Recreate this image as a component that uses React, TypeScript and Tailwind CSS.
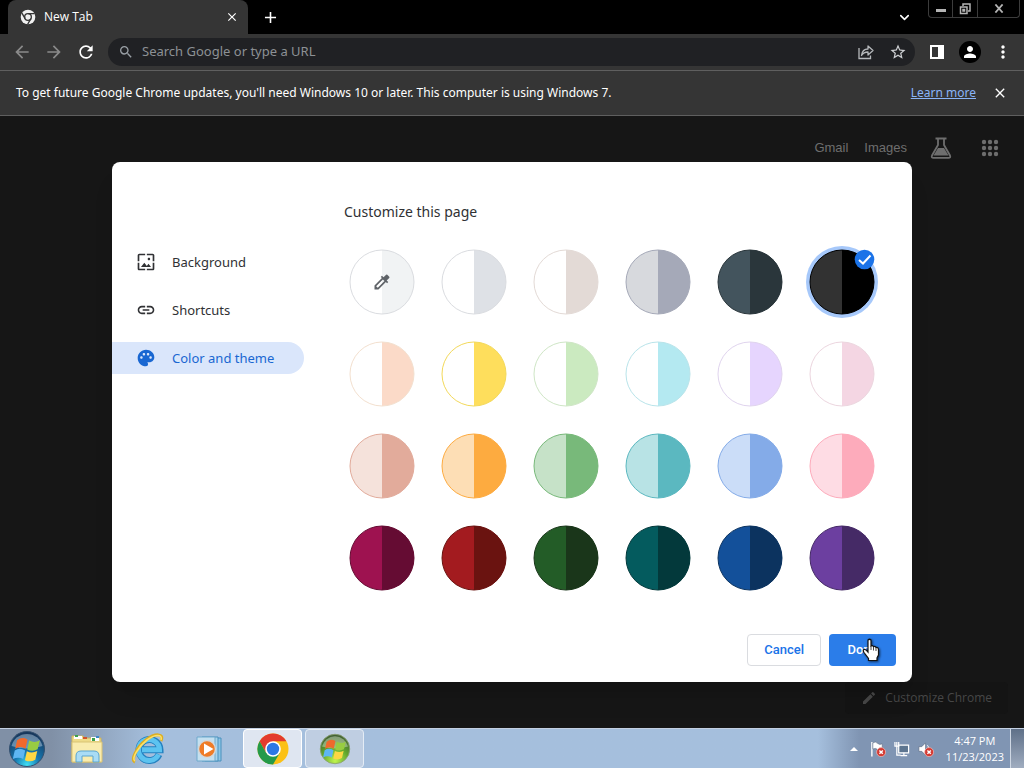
import React, { useState } from 'react';
import {
  MdAdd,
  MdArrowBack,
  MdArrowForward,
  MdClose,
  MdColorize,
  MdEdit,
  MdLink,
  MdMoreVert,
  MdPalette,
  MdPerson,
  MdRefresh,
  MdSearch,
  MdStarBorder,
  MdWallpaper
} from 'react-icons/md';
import { ChevronDown } from 'lucide-react';

interface Swatch {
  name: string;
  left: string;
  right: string;
  stroke: string;
}

const SWATCHES: Swatch[] = [
  { name: 'Custom color', left: '#ffffff', right: '#f1f3f4', stroke: '#dadce0' },
  { name: 'Default color', left: '#ffffff', right: '#dee1e6', stroke: '#dadce0' },
  { name: 'Warm grey', left: '#ffffff', right: '#e3dad6', stroke: '#e3dad6' },
  { name: 'Cool grey', left: '#d7d9dd', right: '#a5a9b8', stroke: '#a5a9b8' },
  { name: 'Midnight blue', left: '#43545d', right: '#2a363b', stroke: '#2a363b' },
  { name: 'Black', left: '#323232', right: '#000000', stroke: '#000000' },
  { name: 'Beige', left: '#ffffff', right: '#fbdac8', stroke: '#f3e0cf' },
  { name: 'Yellow', left: '#ffffff', right: '#fede5c', stroke: '#f3d95a' },
  { name: 'Light green', left: '#ffffff', right: '#cbeac0', stroke: '#cfe6c6' },
  { name: 'Light teal', left: '#ffffff', right: '#b4e9f1', stroke: '#b9e4ea' },
  { name: 'Light purple', left: '#ffffff', right: '#e6d5fe', stroke: '#e0d4ee' },
  { name: 'Light pink', left: '#ffffff', right: '#f4d6e3', stroke: '#ecd6df' },
  { name: 'Rose', left: '#f5e2db', right: '#e2ab9b', stroke: '#e2ab9b' },
  { name: 'Orange', left: '#fddeb5', right: '#fdab40', stroke: '#fdab40' },
  { name: 'Green', left: '#c6e2c8', right: '#78b97a', stroke: '#78b97a' },
  { name: 'Teal', left: '#b8e3e5', right: '#5bb8c0', stroke: '#5bb8c0' },
  { name: 'Blue', left: '#cbddf8', right: '#84abe8', stroke: '#84abe8' },
  { name: 'Pink', left: '#fedce4', right: '#fdabbb', stroke: '#fdabbb' },
  { name: 'Dark rose', left: '#9e1250', right: '#650c33', stroke: '#650c33' },
  { name: 'Dark red', left: '#a31b1f', right: '#6a1310', stroke: '#6a1310' },
  { name: 'Dark green', left: '#235c27', right: '#1a361a', stroke: '#1a361a' },
  { name: 'Dark teal', left: '#045b5e', right: '#03393b', stroke: '#03393b' },
  { name: 'Dark blue', left: '#13509a', right: '#0c335f', stroke: '#0c335f' },
  { name: 'Dark purple', left: '#6c3fa0', right: '#452a66', stroke: '#452a66' }
];

const MENU = [
  { label: 'Background', icon: MdWallpaper },
  { label: 'Shortcuts', icon: MdLink },
  { label: 'Color and theme', icon: MdPalette }
];

const ChromeGlyph: React.FC = () => (
  <svg viewBox="0 0 24 24" className="size-4" fill="none">
    <circle cx="12" cy="12" r="11" fill="#f1f1f1" />
    <circle cx="12" cy="12" r="5" fill="#f1f1f1" stroke="#353535" strokeWidth="2" />
    <path d="M12 7H22M7.700 14.500 2.700 5.800M16.300 14.500 11.300 23.200" stroke="#353535" strokeWidth="2" />
  </svg>
);

const ShareGlyph: React.FC = () => (
  <svg viewBox="0 0 18 18" className="size-[18px]" fill="none" stroke="currentColor" strokeWidth="1.300">
    <path d="M2 5V15.500H13.500V12.500" />
    <path d="M4.500 12.500C5 8.500 7.500 6 11 6V3L16 7.500L11 12V9C8 9 6 10 4.500 12.500Z" strokeLinejoin="round" />
  </svg>
);

const FlaskGlyph: React.FC = () => (
  <svg viewBox="0 0 24 24" className="size-6" fill="none" stroke="currentColor" strokeWidth="1.800">
    <path d="M6.500 2.500H17.500M9 2.500V9L3 19.500Q2 21.800 4.500 21.800H19.500Q22 21.800 21 19.500L15 9V2.500" />
    <path d="M9 12H15L19.500 19.500H4.500Z" fill="currentColor" stroke="none" />
  </svg>
);

const AppsGlyph: React.FC = () => (
  <svg viewBox="0 0 18 18" className="size-[18px]" fill="currentColor">
    {[3, 9, 15].map((y) => [3, 9, 15].map((x) => <circle key={`${x}-${y}`} cx={x} cy={y} r="2.200" />))}
  </svg>
);

const WindowsFlag: React.FC = () => (
  <g transform="translate(-5.200 -4.700) scale(1.300)">
    <path d="M11 11.500Q15 8.500 19 11L17.500 18Q13.500 15.500 9.500 18Z" fill="#f0692c" />
    <path d="M20.300 11.700Q24.500 14 28.500 11.500L26.800 18.500Q23 20.500 18.800 18.600Z" fill="#98cc42" />
    <path d="M9.200 19.300Q13 16.800 17.200 19.300L15.700 26Q12 23.800 7.700 26Z" fill="#5eb6f2" />
    <path d="M18.500 20Q22.500 22 26.500 19.800L25 26.500Q21 28.800 17 26.800Z" fill="#fdd744" />
  </g>
);

const StartOrb: React.FC = () => (
  <svg viewBox="0 0 38 38" className="size-[38px]">
    <defs>
      <radialGradient id="orb" cx="50%" cy="95%" r="90%">
        <stop offset="0" stopColor="#3fe0f5" />
        <stop offset="0.400" stopColor="#1577b0" />
        <stop offset="1" stopColor="#17375c" />
      </radialGradient>
    </defs>
    <circle cx="19" cy="19" r="17.500" fill="url(#orb)" stroke="#34506f" />
    <path d="M3.500 16A16 16 0 0 1 34.500 16Q19 21 3.500 16Z" fill="#dbe8f5" opacity="0.400" />
    <WindowsFlag />
  </svg>
);

const FolderIcon: React.FC = () => (
  <svg viewBox="0 0 34 32" className="h-8 w-[34px]">
    <path d="M2 3H13L15 5H31V29H2Z" fill="#eedb88" stroke="#cdb35c" />
    <path d="M4 3H12V6H4ZM21 4H29V8H21Z" fill="#fff" />
    <path d="M5 2H8V4H5Z" fill="#3aa04a" />
    <path d="M13 4H17V6H13Z" fill="#d2552e" />
    <path d="M22 5H25V8H22Z" fill="#3aa04a" />
    <path d="M26 3H29V5H26Z" fill="#3a86c8" />
    <path d="M2 9H32V29H2Z" fill="#f9ecae" stroke="#d9c374" />
    <path d="M6 29V23Q6 18 11 18H24Q29 18 29 23V29H23V23H12V29Z" fill="#a9dcf5" stroke="#5aa5d0" />
  </svg>
);

const ExplorerIcon: React.FC = () => (
  <svg viewBox="0 0 34 32" className="h-8 w-[34px]" fill="none">
    <path d="M28 21.500A10.500 10.500 0 1 1 29 16.800H11" stroke="#2582c0" strokeWidth="7" />
    <path d="M27.500 21.500A10.500 10.500 0 1 1 28.500 16.800H11" stroke="#5cc3f0" strokeWidth="5" />
    <path d="M4 29C-1 27 6 14 15 7C24 0 34 0 30 8" stroke="#dcae22" strokeWidth="3" />
    <path d="M4 28C0 26 7 14 16 7C24 1 32 1 30 7" stroke="#fbe06a" strokeWidth="1.600" />
  </svg>
);

const MediaPlayerIcon: React.FC = () => (
  <svg viewBox="0 0 34 32" className="h-8 w-[34px]">
    <path d="M12 5H28V28H12Z" fill="#8cc5e6" stroke="#4b91bd" />
    <path d="M9 4H25V28H9Z" fill="#a8d4ec" stroke="#4b91bd" />
    <path d="M4 4H22V28H4Z" fill="#c4e0f0" stroke="#6ea9cc" />
    <circle cx="14" cy="16" r="8.500" fill="#ef7c27" stroke="#d2d8dc" strokeWidth="1.500" />
    <path d="M11 10.500V21.500L20.500 16Z" fill="#fff" />
  </svg>
);

const ChromeIcon: React.FC = () => (
  <svg viewBox="0 0 32 32" className="size-8">
    <circle cx="16" cy="16" r="15.500" fill="#fbc116" />
    <path d="M2.600 8.200A15.500 15.500 0 0 1 29.400 8.200H16L9.200 19.800Z" fill="#e33b2e" />
    <path d="M2.600 8.200A15.500 15.500 0 0 0 16 31.500L22.800 19.900L9.200 19.900Z" fill="#249a4a" />
    <circle cx="16" cy="16" r="7.800" fill="#fff" />
    <circle cx="16" cy="16" r="6.200" fill="#2c78e4" />
  </svg>
);

const GreenOrb: React.FC = () => (
  <svg viewBox="0 0 38 38" className="size-8">
    <defs>
      <radialGradient id="green" cx="50%" cy="90%" r="90%">
        <stop offset="0" stopColor="#c0f550" />
        <stop offset="0.500" stopColor="#62a82c" />
        <stop offset="1" stopColor="#3e5a34" />
      </radialGradient>
    </defs>
    <circle cx="19" cy="19" r="17.500" fill="url(#green)" stroke="#8aa070" />
    <path d="M3.500 16A16 16 0 0 1 34.500 16Q19 21 3.500 16Z" fill="#fff" opacity="0.350" />
    <WindowsFlag />
  </svg>
);

const Muted: React.FC = () => (
  <g>
    <circle cx="11.800" cy="11.800" r="4.800" fill="#d43a32" stroke="#f3c4c0" strokeWidth="0.700" />
    <path d="M10 10L13.600 13.600M13.600 10L10 13.600" stroke="#fff" strokeWidth="1.500" />
  </g>
);

const TrayIcons: React.FC = () => (
  <div className="flex items-center gap-2">
    <svg viewBox="0 0 17 17" className="size-4">
      <path d="M2 1V16.500" stroke="#fff" strokeWidth="1.500" />
      <path d="M3 2Q6 0 8 2.500Q10 4.500 13 3V9Q10 11 8 9Q6 7 3 8.500Z" fill="#fff" stroke="#59677c" strokeWidth="0.600" />
      <Muted />
    </svg>
    <svg viewBox="0 0 17 17" className="size-4" fill="none">
      <path d="M5 4.500H15.500V12.500H5Z" fill="#5d7590" stroke="#fff" strokeWidth="1.300" />
      <path d="M7 15.500H14M10.500 12.500V15.500M3 6V15H7M1 1V5.500H5V1M3 1V5" stroke="#fff" strokeWidth="1.300" />
    </svg>
    <svg viewBox="0 0 17 17" className="size-4">
      <path d="M1 6H4L8 2V15L4 11H1Z" fill="#fff" stroke="#59677c" strokeWidth="0.600" />
      <path d="M10 4.500Q11.500 6 11 8" stroke="#fff" fill="none" />
      <Muted />
    </svg>
  </div>
);

const HandCursor: React.FC = () => (
  <svg viewBox="0 0 18 24" className="pointer-events-none absolute top-1 left-[33px] h-6 w-[18px] drop-shadow-[1px_1px_1px_rgba(0,0,0,0.600)]">
    <path
      d="M6 2Q7.500 0.500 9 2V8Q10.500 7 11.500 8.700Q13 7.900 14 9.500Q16.500 9 16.500 12V17L15 20V22.500H6.500V20.500L2 14.500Q0.500 12 2 11.500Q3.500 11 6 14Z"
      fill="#fff"
      stroke="#111"
      strokeWidth="1.200"
    />
    <path d="M9 8V12M11.500 9V12.500M14 10V13" stroke="#333" strokeWidth="0.900" />
  </svg>
);

const App: React.FC = () => {
  const [section, setSection] = useState('Color and theme');
  const [color, setColor] = useState('Black');
  const [query, setQuery] = useState('');

  return (
    <div className="flex min-h-screen flex-col bg-[#161616] font-['Noto_Sans','Open_Sans',sans-serif] text-xs text-white">
      {/* Tab strip */}
      <header className="flex h-[34px] items-center bg-black pl-2">
        <div className="flex h-full w-60 items-center rounded-t-lg bg-[#353535] pr-2 pl-3">
          <ChromeGlyph />
          <span className="ml-2 flex-1 font-['Open_Sans',sans-serif]">New Tab</span>
          <button aria-label="Close tab" className="flex size-4 items-center justify-center">
            <MdClose size={14} />
          </button>
        </div>
        <button aria-label="New tab" className="ml-3 flex size-5 items-center justify-center">
          <MdAdd size={19} />
        </button>
        <button aria-label="Search tabs" className="mr-4 ml-auto flex size-4 items-center justify-center">
          <ChevronDown size={15} strokeWidth={2.5} />
        </button>
        <div className="mr-1 flex h-[18px] self-start rounded-b border border-t-0 border-[#3c3c3c] text-[#b4b4b4]">
          <button aria-label="Minimize" className="flex w-6 items-center justify-center border-r border-[#3c3c3c]">
            <span className="mt-1 h-[3px] w-[10px] bg-current" />
          </button>
          <button aria-label="Restore" className="flex w-[25px] items-center justify-center border-r border-[#3c3c3c]">
            <svg viewBox="0 0 12 12" className="size-3" fill="none" stroke="currentColor" strokeWidth="1.500">
              <path d="M4 3V1H11V8H9M1.500 4H8V10.500H1.500ZM4 6.500H5.500V8H4Z" />
            </svg>
          </button>
          <button aria-label="Close window" className="flex w-[41px] items-center justify-center">
            <svg viewBox="0 0 10 10" className="h-[9px] w-[10px]" stroke="currentColor" strokeWidth="2">
              <path d="M1 0.500L9 9.500M9 0.500L1 9.500" />
            </svg>
          </button>
        </div>
      </header>

      {/* Toolbar */}
      <nav className="flex h-[37px] items-center border-b border-[#5f5f5f] bg-[#353535] pr-[11px] pl-3">
        <button aria-label="Back" className="flex size-5 items-center justify-center text-[#8a8a8a]">
          <MdArrowBack size={20} />
        </button>
        <button aria-label="Forward" className="ml-3 flex size-5 items-center justify-center text-[#8a8a8a]">
          <MdArrowForward size={20} />
        </button>
        <button aria-label="Reload" className="ml-3 flex size-5 items-center justify-center">
          <MdRefresh size={20} />
        </button>
        <div className="ml-3 flex h-7 flex-1 items-center rounded-full bg-[#202124] pr-2 pl-[10px] text-[#9aa0a6]">
          <MdSearch size={16} />
          <input
            aria-label="Address and search bar"
            value={query}
            onChange={(e) => setQuery(e.target.value)}
            placeholder="Search Google or type a URL"
            className="ml-2 flex-1 bg-transparent text-[13px] outline-none placeholder:text-[#8d9195]"
          />
          <button aria-label="Share" className="text-[#b5b8bb]">
            <ShareGlyph />
          </button>
          <button aria-label="Bookmark" className="ml-[14px] text-[#d0d2d5]">
            <MdStarBorder size={18} />
          </button>
        </div>
        <button aria-label="Side panel" className="ml-3 flex size-5 items-center justify-center">
          <svg viewBox="0 0 14 14" className="size-[14px]" fill="none" stroke="currentColor" strokeWidth="2">
            <path d="M1 1H13V13H1Z" />
            <path d="M9 1H13V13H9Z" fill="currentColor" />
          </svg>
        </button>
        <button aria-label="Profile" className="ml-3 flex size-[22px] items-center justify-center rounded-full bg-black">
          <MdPerson size={18} />
        </button>
        <button aria-label="Menu" className="ml-3 flex size-5 items-center justify-center">
          <MdMoreVert size={20} />
        </button>
      </nav>

      {/* Update notice */}
      <div className="flex h-[45px] items-center border-b border-[#5f5f5f] bg-[#353535] px-4">
        <p className="flex-1">
          To get future Google Chrome updates, you'll need Windows 10 or later. This computer is using Windows 7.
        </p>
        <a href="#" className="text-[#8ab4f8] underline">Learn more</a>
        <button aria-label="Dismiss" className="ml-4 flex size-4 items-center justify-center">
          <MdClose size={16} />
        </button>
      </div>

      {/* New tab page */}
      <main className="relative flex flex-1 flex-col justify-between">
        <div className="flex h-16 items-center justify-end pr-[25px] font-['Liberation_Sans',Arial,sans-serif] text-[13px] text-[#6e6e6e]">
          <a href="#">Gmail</a>
          <a href="#" className="ml-4">Images</a>
          <button aria-label="Search Labs" className="ml-[22px]">
            <FlaskGlyph />
          </button>
          <button aria-label="Google apps" className="ml-7">
            <AppsGlyph />
          </button>
        </div>
        <button className="mr-4 mb-[14px] flex h-8 items-center self-end rounded bg-[#141414] px-4 font-['Open_Sans',sans-serif] text-xs text-[#474747]">
          <MdEdit size={16} className="mr-2" />
          Customize Chrome
        </button>

        {/* Customize dialog */}
        <div className="absolute inset-0 flex items-center justify-center">
          <section
            role="dialog"
            aria-labelledby="dialog-title"
            className="flex min-h-[520px] w-[800px] max-w-full rounded-lg bg-white text-[#303134] shadow-xl"
          >
            <div className="flex w-48 flex-col gap-4 pt-[84px]">
              {MENU.map(({ label, icon: Icon }) => (
                <button
                  key={label}
                  onClick={() => setSection(label)}
                  className={`flex h-8 items-center rounded-r-full pl-6 text-left text-[13px] ${
                    section === label ? 'bg-[#dae6fb] text-[#1967d2]' : ''
                  }`}
                >
                  <Icon size={20} className="mr-4" />
                  <span className="pt-[2px]">{label}</span>
                </button>
              ))}
            </div>
            <div className="flex flex-1 flex-col pr-4 pb-4 pl-10">
              <h2 id="dialog-title" className="mt-10 text-[14px] leading-5">Customize this page</h2>
              <div className="mt-7 grid w-max grid-cols-6 gap-7 pl-[6px]">
                {SWATCHES.map((swatch) => (
                  <label key={swatch.name} className="relative size-16 rounded-full">
                    <input
                      type="radio"
                      name="color"
                      aria-label={swatch.name}
                      checked={color === swatch.name}
                      onChange={() => setColor(swatch.name)}
                      className="sr-only"
                    />
                    <svg viewBox="0 0 64 64" className="size-16 overflow-visible">
                      {color === swatch.name && <circle cx="32" cy="32" r="36" fill="#a6c8fa" />}
                      <circle cx="32" cy="32" r="32" fill={swatch.left} />
                      <path d="M32 0A32 32 0 0 1 32 64Z" fill={swatch.right} />
                      <circle cx="32" cy="32" r="32" fill="none" stroke={swatch.stroke} />
                      {color === swatch.name && (
                        <g>
                          <circle cx="54.500" cy="9.500" r="9.800" fill="#1b73e8" />
                          <path d="M49 10L53 13.500L60.500 5.500" fill="none" stroke="#fff" strokeWidth="2" />
                        </g>
                      )}
                    </svg>
                    {swatch.name === 'Custom color' && (
                      <span className="absolute inset-0 flex items-center justify-center text-[#5f6368]">
                        <MdColorize size={20} />
                      </span>
                    )}
                  </label>
                ))}
              </div>
              <div className="mt-auto flex justify-end gap-2 font-['Roboto',sans-serif] text-[13px] font-medium">
                <button className="h-8 rounded border border-[#dadce0] px-4 text-[#1a73e8]">Cancel</button>
                <button className="relative h-8 w-[67px] rounded bg-[#2b7de9] text-white">
                  Done
                  <HandCursor />
                </button>
              </div>
            </div>
          </section>
        </div>
      </main>

      {/* Taskbar */}
      <footer className="flex h-10 items-center border-t border-[#c3d0e2] bg-linear-to-r from-[#8090a6] from-5% via-[#a5bfdd] via-15% to-[#a5bfdd]">
        <button aria-label="Start" className="ml-2">
          <StartOrb />
        </button>
        <div className="ml-[10px] flex h-full items-center">
          <button aria-label="Windows Explorer" className="flex w-[61px] justify-center">
            <FolderIcon />
          </button>
          <button aria-label="Internet Explorer" className="flex w-[62px] justify-center">
            <ExplorerIcon />
          </button>
          <button aria-label="Windows Media Player" className="flex w-[61px] justify-center">
            <MediaPlayerIcon />
          </button>
          <button aria-label="Google Chrome" className="ml-[3px] flex h-full w-[59px] items-center justify-center rounded-sm border border-white bg-[#dfe6f1]">
            <ChromeIcon />
          </button>
          <button aria-label="Windows Update" className="ml-[3px] flex h-full w-[59px] items-center justify-center rounded-sm border border-[#e4ecf5] bg-[#bfcee2]">
            <GreenOrb />
          </button>
        </div>
        <div className="ml-auto flex h-full items-center bg-linear-to-r from-[#a5bfdd] to-[#8095b3] to-20% pl-8">
          <button aria-label="Show hidden icons" className="mr-3">
            <svg viewBox="0 0 8 4" className="h-1 w-2" fill="#fff">
              <path d="M0 4L4 0L8 4Z" />
            </svg>
          </button>
          <TrayIcons />
          <div className="mr-[6px] ml-3 text-center font-['Open_Sans',sans-serif] text-[11px] leading-4">
            4:47 PM
            <br />
            11/23/2023
          </div>
          <button aria-label="Show desktop" className="h-full w-[14px] border-l border-[#cfd8e4] bg-linear-to-b from-[#5f7088] to-[#a0adc0]" />
        </div>
      </footer>
    </div>
  );
};

export default App;
